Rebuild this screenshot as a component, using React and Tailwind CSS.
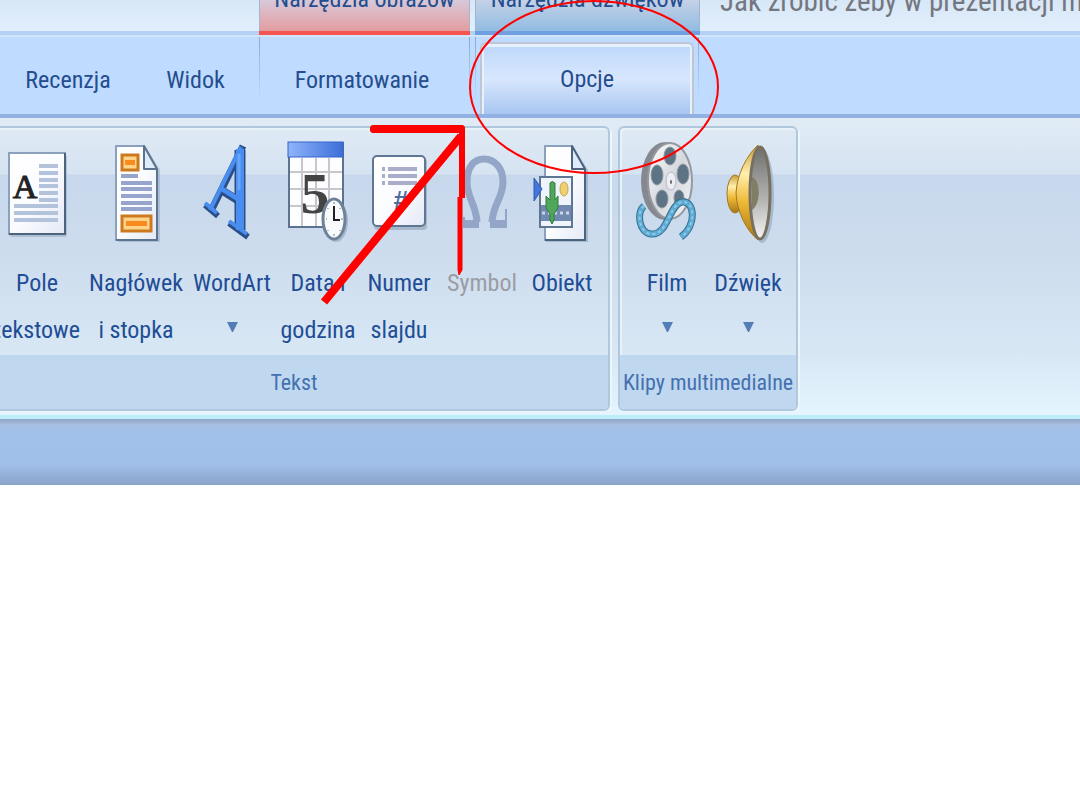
const uiFont = "font-['Liberation_Sans_Narrow','Arial_Narrow','Roboto_Condensed','Liberation_Sans',sans-serif]"

function IconFrame({ children }) {
  return (
    <svg className="w-[72px] h-[104px] shrink-0 overflow-visible" viewBox="0 0 72 104" aria-hidden="true">
      {children}
    </svg>
  )
}

function TextBoxIcon() {
  return (
    <IconFrame>
      <defs>
        <linearGradient id="paper" x1="0" y1="0" x2="1" y2="1">
          <stop offset="0" stopColor="#ffffff" />
          <stop offset="0.5" stopColor="#fbfcff" />
          <stop offset="1" stopColor="#e3e9f6" />
        </linearGradient>
      </defs>
      <rect x="9" y="15" width="57" height="82" rx="2" fill="#8fa3bb" opacity="0.5" />
      <rect x="8" y="13" width="56" height="81" fill="url(#paper)" stroke="#8ba0bd" strokeWidth="2" />
      <path d="M64 13V94H8" fill="none" stroke="#4d647f" strokeWidth="2" />
      <text x="24" y="58" textAnchor="middle" fontFamily="Liberation Serif, serif" fontSize="34" fill="#222" stroke="#222">A</text>
      <path d="M38 26H57M38 33H57M38 40H57M38 46H57M38 53H57M38 60H57M13 66H57M13 73H57M13 80H57" stroke="#b3c3db" strokeWidth="4" />
    </IconFrame>
  )
}

function HeaderFooterIcon() {
  return (
    <IconFrame>
      <path d="M18 6H45L60 30V102H18Z" fill="#8fa3bb" opacity="0.5" />
      <path d="M16 6H44L57 29V100H16Z" fill="url(#paper)" stroke="#8ba0bd" strokeWidth="2" strokeLinejoin="round" />
      <path d="M57 29V100H16" fill="none" stroke="#5d748f" strokeWidth="2" />
      <path d="M44 6V29H57Z" fill="#dfeafa" stroke="#5d748f" strokeWidth="2" strokeLinejoin="round" />
      <rect x="22" y="15" width="16" height="15" fill="#ffd48a" stroke="#cc7a20" strokeWidth="3" />
      <rect x="25" y="20" width="10" height="5" fill="#f98a1e" />
      <path d="M21 36H38M21 43H52M21 49H52M21 56H52M21 63H52M21 69H52" stroke="#97a5cd" strokeWidth="4" />
      <rect x="22" y="76" width="29" height="15" fill="#ffd48a" stroke="#cc7a20" strokeWidth="3" />
      <rect x="26" y="81" width="21" height="5" fill="#f98a1e" />
    </IconFrame>
  )
}

function WordArtIcon() {
  return (
    <IconFrame>
      <g fill="none" strokeLinejoin="round">
        <g stroke="#2a4f88">
          <path d="M47 6L15 71" strokeWidth="7" />
          <path d="M44 10V90" strokeWidth="11" />
          <path d="M27 51L43 61" strokeWidth="8" />
          <path d="M9 65L22 76M33 83L52 97" strokeWidth="6" />
        </g>
        <g stroke="#4a8df0">
          <path d="M45 7L14 70" strokeWidth="4" />
          <path d="M44 9V90" strokeWidth="8" />
          <path d="M26 49L42 59" strokeWidth="5" />
          <path d="M9 63L21 73M33 81L51 94" strokeWidth="4" />
        </g>
        <path d="M43 14V50" stroke="#6aa5f7" strokeWidth="3" />
      </g>
    </IconFrame>
  )
}

function DateTimeIcon() {
  return (
    <IconFrame>
      <defs>
        <linearGradient id="calendarTop" x1="0" y1="0" x2="1" y2="0">
          <stop offset="0" stopColor="#8fb4fb" />
          <stop offset="1" stopColor="#3c6fd8" />
        </linearGradient>
      </defs>
      <rect x="7" y="3" width="54" height="84" fill="#fdfdff" stroke="#5d7190" strokeWidth="2" />
      <path d="M20 18V86M34 18V86M47 18V86M8 32H60M8 49H60M8 66H60" stroke="#c5c7cc" strokeWidth="2" />
      <rect x="6" y="2" width="55" height="15" fill="url(#calendarTop)" stroke="#3465cc" strokeWidth="1" />
      <text x="33" y="73" textAnchor="middle" fontFamily="Liberation Serif, serif" fontWeight="700" fontSize="58" fill="#444">5</text>
      <ellipse cx="54" cy="81" rx="12" ry="21" fill="#8296ac" opacity="0.5" />
      <ellipse cx="52" cy="79" rx="11" ry="20" fill="#f8fafc" stroke="#6d8299" strokeWidth="3" />
      <path d="M52 66V80H58" fill="none" stroke="#222" strokeWidth="2" />
      <path d="M52 62V64M52 94V96M44 79H45M59 79H61M46 68V69M58 68V69M46 90V91M58 90V91" stroke="#6e7f90" strokeWidth="1" />
    </IconFrame>
  )
}

function SlideNumberIcon() {
  return (
    <IconFrame>
      <rect x="11" y="18" width="53" height="72" rx="4" fill="#8296ac" opacity="0.5" />
      <rect x="10" y="16" width="52" height="70" rx="4" fill="url(#paper)" stroke="#5f7793" strokeWidth="2" />
      <path d="M19 29H22M25 29H54M19 36H22M25 36H54M19 43H22M25 43H54" stroke="#aaadca" strokeWidth="4" />
      <text x="38" y="69" textAnchor="middle" fontFamily="Liberation Sans, sans-serif" fontWeight="700" fontSize="26" fill="#4b6c9f">#</text>
    </IconFrame>
  )
}

function SymbolIcon() {
  return (
    <IconFrame>
      <g fill="none" stroke="#93a6c7">
        <path d="M31 82C30 64 21 58 21 42C21 27 28 19 38 19C48 19 57 27 57 42C57 58 47 64 46 82" strokeWidth="7" />
        <path d="M18 84H33M44 84H61" strokeWidth="8" />
        <path d="M18 77V88M60 69V88" strokeWidth="2" />
      </g>
    </IconFrame>
  )
}

function ObjectIcon() {
  return (
    <IconFrame>
      <path d="M20 7H47L62 30V102H20Z" fill="#8296ac" opacity="0.5" />
      <path d="M19 6H46L59 29V100H19Z" fill="url(#paper)" stroke="#8ba0bd" strokeWidth="2" strokeLinejoin="round" />
      <path d="M46 6V29H59Z" fill="#dfeafa" stroke="#4d647f" strokeWidth="2" strokeLinejoin="round" />
      <path d="M59 29V100H19" fill="none" stroke="#4d647f" strokeWidth="2" />
      <rect x="14" y="37" width="32" height="50" fill="#eef3fc" stroke="#5d7694" strokeWidth="2" />
      <rect x="15" y="65" width="30" height="16" fill="#7188b0" />
      <path d="M16 73H45" stroke="#cbd5e8" strokeWidth="3" strokeDasharray="3 3" />
      <ellipse cx="38" cy="49" rx="4" ry="7" fill="#f0d070" stroke="#c9a548" />
      <path d="M8 38L16 49L8 61Z" fill="#4477dd" stroke="#2d58b6" />
      <path d="M24 43Q26 40 29 43V60L32 56V68L28 74V80L26 84L24 80V74L20 68V56L24 60Z" fill="#50a65a" stroke="#2e7d3b" strokeLinejoin="round" />
    </IconFrame>
  )
}

function FilmIcon() {
  return (
    <IconFrame>
      <defs>
        <linearGradient id="reel" x1="0" y1="0" x2="1" y2="1">
          <stop offset="0" stopColor="#ffffff" />
          <stop offset="0.5" stopColor="#d5d8dd" />
          <stop offset="1" stopColor="#f5f6f8" />
        </linearGradient>
      </defs>
      <ellipse cx="34" cy="41" rx="24" ry="39" fill="#85898f" />
      <ellipse cx="39" cy="41" rx="22" ry="38" fill="url(#reel)" stroke="#9499a1" strokeWidth="2" />
      <g fill="#5e7484" stroke="#8c98a3">
        <ellipse cx="39" cy="16" rx="6" ry="9" />
        <ellipse cx="26" cy="35" rx="6" ry="10" />
        <ellipse cx="52" cy="34" rx="6" ry="10" />
        <ellipse cx="31" cy="59" rx="6" ry="9" />
        <ellipse cx="48" cy="58" rx="5" ry="8" />
      </g>
      <ellipse cx="40" cy="41" rx="5" ry="9" fill="#eceef3" stroke="#b7b9c4" />
      <ellipse cx="40" cy="42" rx="1" ry="2" fill="#666" />
      <path d="M13 66C5 72 8 93 20 94C37 96 38 64 51 62C64 60 66 86 50 97" fill="none" stroke="#35708f" strokeWidth="7" />
      <path d="M13 66C5 72 8 93 20 94C37 96 38 64 51 62C64 60 66 86 50 97" fill="none" stroke="#5fabd4" strokeWidth="5" />
      <path d="M13 66C5 72 8 93 20 94C37 96 38 64 51 62C64 60 66 86 50 97" fill="none" stroke="#8ccbeb" strokeWidth="2" strokeDasharray="3 3" />
    </IconFrame>
  )
}

function SoundIcon() {
  return (
    <IconFrame>
      <defs>
        <linearGradient id="brass" x1="0" y1="0" x2="0" y2="1">
          <stop offset="0" stopColor="#c99a3a" />
          <stop offset="0.3" stopColor="#fff0ac" />
          <stop offset="0.6" stopColor="#efb936" />
          <stop offset="1" stopColor="#a87512" />
        </linearGradient>
        <linearGradient id="cone" x1="0" y1="0" x2="0" y2="1">
          <stop offset="0" stopColor="#6e6f6d" />
          <stop offset="0.6" stopColor="#b8b8b6" />
          <stop offset="1" stopColor="#f4f4f4" />
        </linearGradient>
      </defs>
      <ellipse cx="50" cy="56" rx="12" ry="47" fill="#8296ac" opacity="0.5" />
      <ellipse cx="23" cy="54" rx="8" ry="19" fill="url(#brass)" stroke="#a37825" />
      <path d="M46 5C35 15 25 34 24 53C25 73 35 91 46 100Z" fill="url(#brass)" stroke="#a37825" />
      <ellipse cx="48" cy="53" rx="10" ry="46" fill="url(#cone)" stroke="#777060" strokeWidth="3" />
      <path d="M40 37C49 40 49 64 40 70Z" fill="#817e65" />
    </IconFrame>
  )
}

function DropArrow() {
  return (
    <svg className="w-[11px] h-[11px] mt-[14px]" viewBox="0 0 11 11" aria-hidden="true">
      <path d="M0 1H11L6 11H5Z" fill="#527db5" />
    </svg>
  )
}

const textTools = [
  { lines: ['Pole', 'tekstowe'], icon: TextBoxIcon, width: 'w-[98px]' },
  { lines: ['Nagłówek', 'i stopka'], icon: HeaderFooterIcon, width: 'w-[100px]' },
  { lines: ['WordArt'], icon: WordArtIcon, width: 'w-[92px]', menu: true },
  { lines: ['Data i', 'godzina'], icon: DateTimeIcon, width: 'w-20' },
  { lines: ['Numer', 'slajdu'], icon: SlideNumberIcon, width: 'w-[82px]' },
  { lines: ['Symbol'], icon: SymbolIcon, width: 'w-[84px]', disabled: true },
  { lines: ['Obiekt'], icon: ObjectIcon, width: 'w-[76px]' },
]

const mediaTools = [
  { lines: ['Film'], icon: FilmIcon, width: 'w-20', menu: true },
  { lines: ['Dźwięk'], icon: SoundIcon, width: 'w-[82px]', menu: true },
]

function ToolButton({ tool }) {
  const Icon = tool.icon
  return (
    <button
      type="button"
      disabled={tool.disabled}
      className={`${tool.width} shrink-0 flex flex-col items-center text-2xl/[47px] whitespace-nowrap ${tool.disabled ? 'text-[#9b9ca3]' : 'text-[#204d96]'}`}
    >
      <Icon />
      <span className="mt-4">{tool.lines[0]}</span>
      {tool.lines[1] && <span>{tool.lines[1]}</span>}
      {tool.menu && <DropArrow />}
    </button>
  )
}

function RibbonGroup({ title, tools, className }) {
  return (
    <section className={`shrink-0 flex flex-col rounded-md border-2 border-[#afc8de] shadow-[2px_1px_0_#eef6fd,inset_2px_2px_0_#e8f0f8] overflow-hidden ${className}`}>
      <div className="flex justify-center pt-3 h-[227px]">
        {tools.map((tool) => (
          <ToolButton key={tool.lines[0]} tool={tool} />
        ))}
      </div>
      <h2 className="h-[54px] bg-[#c0d8ef] text-center text-[22px] leading-[56px] text-[#4470b1] whitespace-nowrap">{title}</h2>
    </section>
  )
}

function Annotations() {
  return (
    <svg className="absolute left-0 top-0 w-[720px] h-[310px] pointer-events-none" viewBox="0 0 720 310" fill="none" stroke="#ff0000" aria-hidden="true">
      <ellipse cx="594" cy="87" rx="124" ry="86" strokeWidth="2" />
      <path d="M370 127L372 125H463L465 127V133H372L370 131Z" fill="#ff0000" stroke="none" />
      <path d="M462 127V198" strokeWidth="6" />
      <path d="M460 197V270" strokeWidth="5" />
      <path d="M458 270H462L459 275Z" fill="#ff0000" strokeWidth="1" />
      <path d="M324 302L461 136" strokeWidth="8" />
    </svg>
  )
}

const fadeLine = 'w-px h-16 shrink-0 bg-linear-to-b from-[#8ea9cc] to-[#bfdbff]'

export default function App() {
  return (
    <div className={`relative min-h-screen bg-white overflow-hidden ${uiFont}`}>
      <header className="flex h-[31px] bg-linear-to-b from-[#d8e7f7] to-[#e1effc] text-2xl/7 text-[#244d8e] whitespace-nowrap">
        <div className="w-[259px] shrink-0" />
        <div className="w-[211px] shrink-0 border-x border-[#a9b4cc] bg-linear-to-b from-[#d6c9d9] to-[#e39c9f] text-center">
          <span className="block -mt-[15px]">Narzędzia obrazów</span>
        </div>
        <div className="ml-[5px] w-[225px] shrink-0 border-x border-[#9db4d2] bg-linear-to-b from-[#c5d1e6] to-[#90bce2] text-center">
          <span className="block -mt-[15px]">Narzędzia dźwięków</span>
        </div>
        <h1 className="ml-5 -mt-[13px] text-[29px] text-[#74777f]">Jak zrobić żeby w prezentacji m</h1>
      </header>

      <div className="flex h-1 bg-[#b4d1f5]">
        <div className="ml-[259px] w-[211px] bg-[#f4564f]" />
        <div className="ml-[5px] w-[225px] bg-[#71a0e0]" />
      </div>

      <nav className="flex h-[83px] border-t-2 border-b-4 border-t-[#d3e3f8] border-b-[#90b1e2] bg-[#bfdbff] text-2xl text-[#244d8e]">
        <button type="button" className="ml-1 w-32 shrink-0 pt-2">Recenzja</button>
        <button type="button" className="w-[127px] shrink-0 pt-2">Widok</button>
        <span className={fadeLine} />
        <button type="button" className="w-[204px] shrink-0 pt-2">Formatowanie</button>
        <span className="w-[5px] shrink-0" />
        <span className={fadeLine} />
        <span className="w-[5px] shrink-0" />
        <span className={fadeLine} />
        <button type="button" className="mx-1 mt-[5px] w-[214px] shrink-0 rounded-t-md border-x-2 border-t-2 border-[#bfc6d3] bg-linear-to-b from-[#bdd8fb] via-[#d8e7fd] to-[#a8c6f1] shadow-[inset_2px_3px_0_#e6f1ff,inset_-2px_0_0_#e6f1ff]">
          Opcje
        </button>
        <span className={fadeLine} />
      </nav>

      <main>
        <div className="flex gap-2 pt-2 pb-1 border-b-4 border-[#bdeefa] bg-[linear-gradient(#e0ebf5_0,#d6e3f1_56px,#c7d8ed_57px,#cddced_130px,#d7e7f4_235px,#e5f5ff_100%)]">
          <RibbonGroup title="Tekst" tools={textTools} className="-ml-[22px] w-[632px]" />
          <RibbonGroup title="Klipy multimedialne" tools={mediaTools} className="w-[180px]" />
        </div>
        <div className="h-[66px] bg-[linear-gradient(#8fa5c6_0,#a9c0e2_6px,#a2c1ea_10px,#a0bfe8_45px,#8aa3cb_100%)]" />
      </main>

      <Annotations />
    </div>
  )
}
